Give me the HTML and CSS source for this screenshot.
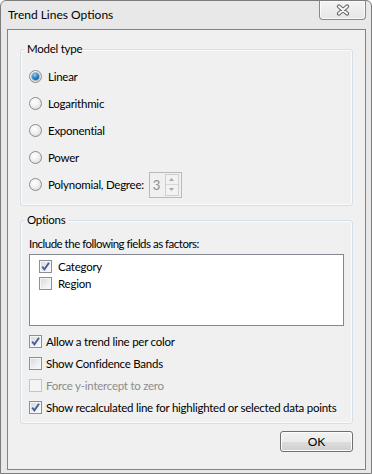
FILE: index.html
```html
<!DOCTYPE html>
<html lang="en">
<head>
  <meta charset="UTF-8" />
  <meta name="viewport" content="width=device-width, initial-scale=1.0">
  <title>Trend Lines Options</title>
  <link rel="stylesheet" href="styles.css">
</head>
<body>
  <div class="window">
    <div class="titlebar">
      <span class="title">Trend Lines Options</span>
      <button class="close" title="Close">
        <svg width="16" height="12" viewBox="0 0 16 12">
          <path d="M4 2.5 L12 9.5 M12 2.5 L4 9.5" stroke="#6b6b6b" stroke-width="4.2" stroke-linecap="round" fill="none"/>
          <path d="M4 2.5 L12 9.5 M12 2.5 L4 9.5" stroke="#fbfbfb" stroke-width="2" stroke-linecap="round" fill="none"/>
        </svg>
      </button>
    </div>

    <div class="client">
      <fieldset class="group model">
        <legend>Model type</legend>
        <div class="radio-row"><span class="radio checked"></span>Linear</div>
        <div class="radio-row"><span class="radio"></span>Logarithmic</div>
        <div class="radio-row"><span class="radio"></span>Exponential</div>
        <div class="radio-row"><span class="radio"></span>Power</div>
        <div class="radio-row">
          <span class="radio"></span>Polynomial, Degree:
          <span class="spin">
            <span class="spin-value">3</span>
            <span class="spin-btns">
              <span class="spin-btn"><svg width="5" height="3" viewBox="0 0 5 3"><path d="M0 3 L2.5 0 L5 3 Z" fill="#a8a8a8"/></svg></span>
              <span class="spin-btn"><svg width="5" height="3" viewBox="0 0 5 3"><path d="M0 0 L2.5 3 L5 0 Z" fill="#a8a8a8"/></svg></span>
            </span>
          </span>
        </div>
      </fieldset>

      <fieldset class="group options">
        <legend>Options</legend>
        <div class="hint">Include the following fields as factors:</div>
        <div class="listbox">
          <div class="item"><span class="check checked"><svg width="11" height="11" viewBox="0 0 11 11"><path d="M2.2 5.6 L4.4 8.4 L9 1.8" stroke="#4a5f9a" stroke-width="1.9" fill="none"/></svg></span>Category</div>
          <div class="item"><span class="check"></span>Region</div>
        </div>
        <div class="check-row"><span class="check checked"><svg width="11" height="11" viewBox="0 0 11 11"><path d="M2.2 5.6 L4.4 8.4 L9 1.8" stroke="#4a5f9a" stroke-width="1.9" fill="none"/></svg></span>Allow a trend line per color</div>
        <div class="check-row"><span class="check"></span>Show Confidence Bands</div>
        <div class="check-row disabled"><span class="check"></span>Force y-intercept to zero</div>
        <div class="check-row"><span class="check checked"><svg width="11" height="11" viewBox="0 0 11 11"><path d="M2.2 5.6 L4.4 8.4 L9 1.8" stroke="#4a5f9a" stroke-width="1.9" fill="none"/></svg></span>Show recalculated line for highlighted or selected data points</div>
      </fieldset>

      <div class="buttons">
        <button class="ok">OK</button>
      </div>
    </div>
  </div>
</body>
</html>
```

FILE: styles.css
```css
* {
  box-sizing: border-box;
}

body {
  margin: 0;
  font-family: Lato, "Open Sans", sans-serif;
  font-size: 11.5px;
  letter-spacing: -0.25px;
  color: #000;
  background: #fff;
}

.window {
  width: 372px;
  height: 474px;
  display: flex;
  flex-direction: column;
  background: #e8e8e8;
  border: 1px solid #7c7c7c;
  border-radius: 6px 6px 0 0;
  padding: 0 5px 3px 6px;
}

.titlebar {
  height: 28px;
  display: flex;
  justify-content: space-between;
  align-items: flex-start;
}

.title {
  margin-top: 6px;
  margin-left: 1px;
  line-height: 16px;
  font-size: 12px;
  letter-spacing: 0;
}

.close {
  width: 47px;
  height: 20px;
  margin-top: -1px;
  padding: 0;
  border: 1px solid #8a8a8a;
  border-top-color: #7c7c7c;
  border-radius: 0 0 4px 4px;
  background: linear-gradient(#f4f4f4, #e6e6e6);
  box-shadow: inset 0 0 0 1px #fafafa;
  display: flex;
  align-items: center;
  justify-content: center;
}

.client {
  flex: 1;
  background: #f0f0f0;
  border: 1px solid #838383;
  padding: 11px 12px 0 12px;
}

.group {
  margin: 0;
  border: 1px solid #d5dfe5;
  border-radius: 3px;
  box-shadow: inset 0 0 0 1px #fafbfc;
  min-width: 0;
}

.group legend {
  padding: 0 2px;
  margin-left: -4px;
  line-height: 16px;
}

.model {
  padding: 6px 8px 7px 8px;
}

.radio-row {
  height: 27px;
  display: flex;
  align-items: center;
}

.radio {
  width: 13px;
  height: 13px;
  border-radius: 50%;
  border: 1px solid #8c8c8c;
  background: radial-gradient(circle at 40% 35%, #ffffff 0%, #f1f1f1 45%, #cdcdcd 100%);
  margin-right: 6px;
  flex: none;
  display: flex;
  align-items: center;
  justify-content: center;
}

.radio.checked::after {
  content: "";
  width: 7px;
  height: 7px;
  border-radius: 50%;
  background: radial-gradient(circle at 40% 30%, #8fd0f5 0%, #2a86cc 45%, #0d3e7a 100%);
  box-shadow: 0 0 0 1px rgba(20, 70, 130, 0.35);
}

.spin {
  margin-left: 5px;
  width: 33px;
  height: 26px;
  border: 1px solid #b9b9b9;
  background: #f0f0f0;
  display: flex;
  align-items: center;
  padding: 1px 2px 1px 3px;
}

.spin-value {
  flex: 1;
  color: #8c8c8c;
  font-size: 13px;
  line-height: 16px;
}

.spin-btns {
  width: 14px;
  height: 22px;
  display: flex;
  flex-direction: column;
  border: 1px solid #cfcfcf;
}

.spin-btn {
  flex: 1;
  display: flex;
  align-items: center;
  justify-content: center;
  background: #f2f2f2;
}

.spin-btn + .spin-btn {
  border-top: 1px solid #d8d8d8;
}

.options {
  margin-top: 6px;
  padding: 8px 8px 5px 8px;
}

.hint {
  line-height: 16px;
  letter-spacing: -0.5px;
}

.listbox {
  margin-top: 2px;
  height: 72px;
  background: #fff;
  border: 1px solid #828790;
  padding: 3px 0 0 9px;
}

.item {
  height: 17px;
  display: flex;
  align-items: center;
}

.item .check {
  margin-right: 6px;
}

.check {
  width: 13px;
  height: 13px;
  flex: none;
  border: 1px solid #8e8f8f;
  background: linear-gradient(135deg, #d3d6db 0%, #eceef0 55%, #fbfbfb 100%);
  box-shadow: inset 0 0 0 1px #f6f6f6;
  display: flex;
  align-items: center;
  justify-content: center;
  margin-right: 4px;
}

.check-row {
  height: 22px;
  display: flex;
  align-items: center;
  white-space: nowrap;
}

.listbox + .check-row {
  margin-top: 4px;
}

.check-row.disabled {
  color: #8d8d8d;
}

.check-row.disabled .check {
  border-color: #c6c6c6;
  background: #f4f4f4;
  box-shadow: none;
}

.buttons {
  display: flex;
  justify-content: flex-end;
  margin-top: 7px;
}

.ok {
  width: 73px;
  height: 21px;
  padding: 0;
  font-family: inherit;
  font-size: 12px;
  letter-spacing: 0;
  color: #000;
  border: 1px solid #707070;
  border-radius: 3px;
  background: linear-gradient(#f2f2f2 0%, #ebebeb 50%, #dddddd 51%, #cfcfcf 100%);
  box-shadow: inset 0 0 0 1px #fcfcfc;
}
```
